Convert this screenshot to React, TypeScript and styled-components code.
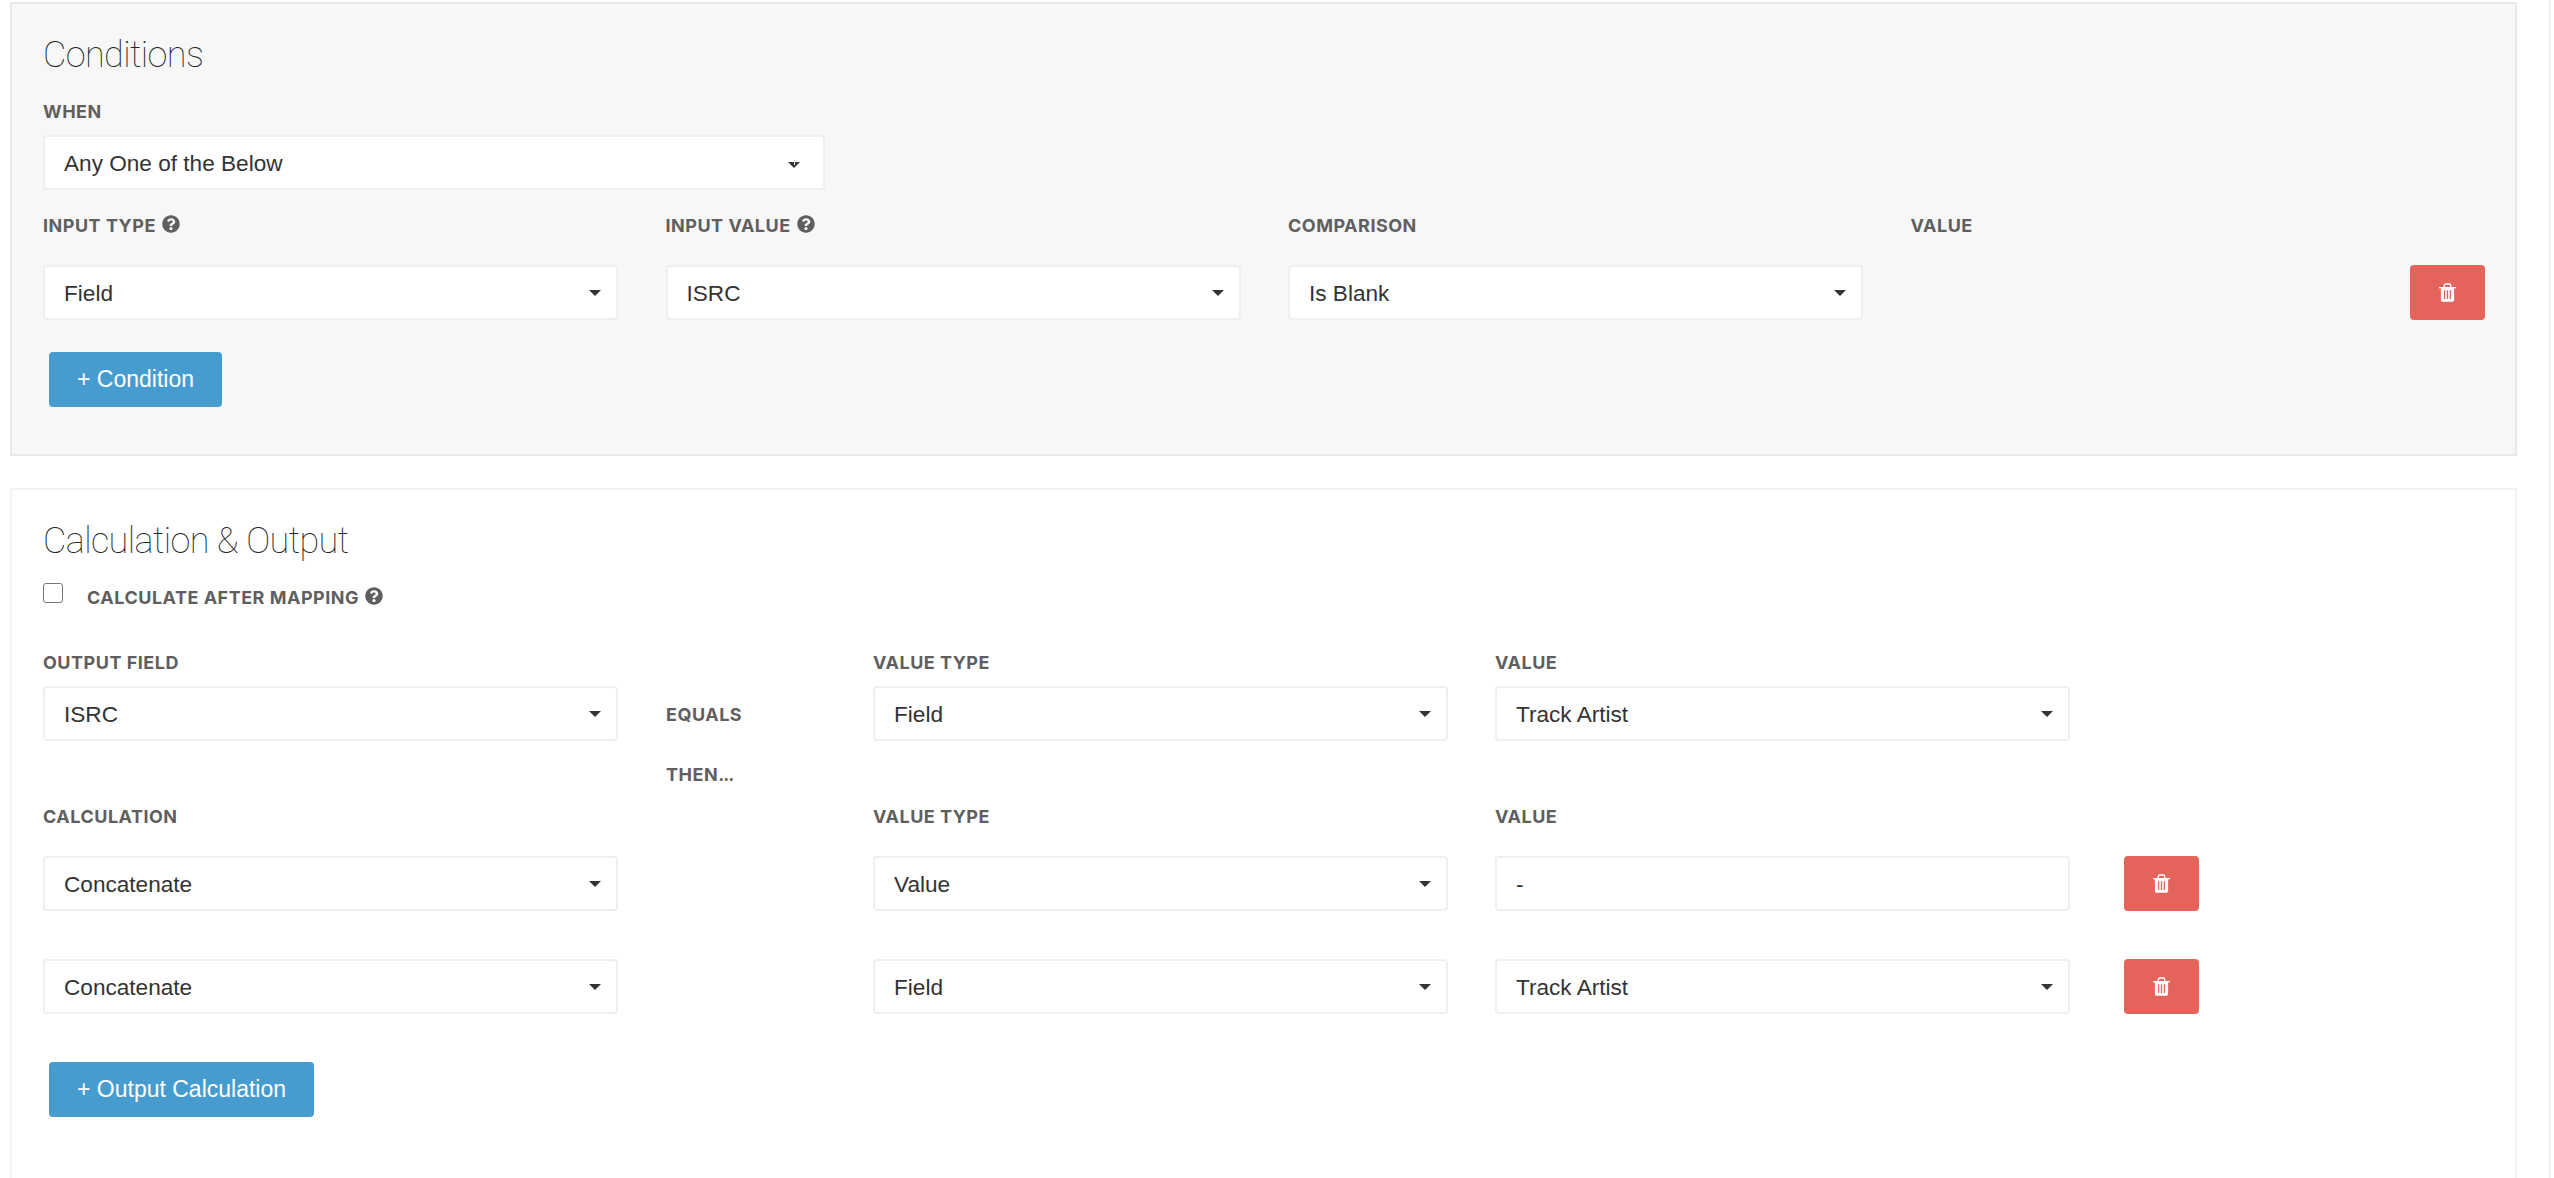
import { ReactNode } from "react";
import styled, { createGlobalStyle } from "styled-components";
import { FaQuestionCircle } from "react-icons/fa";

const GlobalStyle = createGlobalStyle`
  html, body {
    margin: 0;
    background: #fff;
    font-family: "Liberation Sans", Arial, sans-serif;
    color: #333;
  }
  * { box-sizing: border-box; }
`;

const Page = styled.div`
  width: 2551px;
  min-height: 1178px;
  height: 1178px;
  overflow: hidden;
  padding: 2px 32px 0 10px;
  border-right: 2px solid #f0f0f0;
`;

const Panel = styled.section<{ $muted?: boolean }>`
  background: ${(p) => (p.$muted ? "#f7f7f7" : "#fff")};
  border: 2px solid ${(p) => (p.$muted ? "#e8e8e8" : "#f3f3f3")};
  padding: 28px 32px 0 31px;
  height: ${(p) => (p.$muted ? "454px" : "720px")};
  margin-bottom: 32px;
`;

const Heading = styled.h2`
  margin: 0 0 22px;
  font-family: Roboto, sans-serif;
  font-weight: 100;
  font-size: 36px;
  line-height: 46px;
  color: #222;
  letter-spacing: -0.6px;
`;

const Label = styled.label`
  display: flex;
  align-items: center;
  gap: 6px;
  height: 22px;
  font-family: Inter, sans-serif;
  font-weight: 700;
  font-size: 18px;
  letter-spacing: 0.5px;
  color: #5f5f5f;
  white-space: nowrap;
`;

const Help = styled(FaQuestionCircle)`
  width: 18px;
  height: 18px;
  margin-top: -3px;
  color: #5f5f5f;
`;

const SelectWrap = styled.div<{ $wide?: boolean }>`
  position: relative;
  width: ${(p) => (p.$wide ? "782px" : "575px")};
  height: 55px;
  &::after {
    content: "";
    position: absolute;
    right: ${(p) => (p.$wide ? "25px" : "17px")};
    top: ${(p) => (p.$wide ? "27px" : "25px")};
    border-left: 6px solid transparent;
    border-right: 6px solid transparent;
    border-top: 6px solid #333;
    pointer-events: none;
  }
  /* the wider select's arrow has a small notch in its top edge */
  &::before {
    content: "";
    display: ${(p) => (p.$wide ? "block" : "none")};
    position: absolute;
    z-index: 1;
    right: 30px;
    top: 27px;
    width: 1px;
    height: 3px;
    background: #fff;
    pointer-events: none;
  }
`;

const fieldStyles = `
  display: block;
  width: 100%;
  height: 55px;
  padding: 2px 19px 0;
  background: #fff;
  border: 2px solid #efefef;
  border-radius: 4px;
  font-family: "Liberation Sans", Arial, sans-serif;
  font-size: 22.6px;
  color: #333;
  outline: none;
`;

const NativeSelect = styled.select`
  ${fieldStyles}
  appearance: none;
`;

const TextInput = styled.input`
  ${fieldStyles}
  width: 575px;
`;

const Button = styled.button`
  display: block;
  height: 55px;
  margin-left: 6px;
  padding: 0 28px;
  border: none;
  border-radius: 4px;
  background: #479ccf;
  color: #fff;
  font-family: "Liberation Sans", Arial, sans-serif;
  font-size: 23px;
`;

const DeleteButton = styled.button`
  display: flex;
  align-items: center;
  justify-content: center;
  width: 75px;
  height: 55px;
  padding: 0;
  border: none;
  border-radius: 4px;
  background: #e4645c;
  color: #fff;
`;

const WhenBlock = styled.div`
  display: flex;
  flex-direction: column;
  gap: 13px;
  margin-bottom: 24px;
`;

const ConditionHead = styled.div`
  display: grid;
  grid-template-columns: repeat(3, 622.5px) 574px;
  margin-bottom: 29px;
`;

const ConditionRow = styled.div`
  display: grid;
  grid-template-columns: repeat(3, 622.5px) 574px;
  margin-bottom: 32px;
`;

const EndCell = styled.div`
  display: flex;
  justify-content: flex-end;
`;

const CheckRow = styled.div`
  display: flex;
  align-items: center;
  gap: 24px;
  margin: 1px 0 43px;
`;

const Checkbox = styled.input`
  appearance: none;
  width: 20px;
  height: 20px;
  margin: -9px 0 0;
  background: #fff;
  border: 1.5px solid #767676;
  border-radius: 3px;
`;

/* columns: calculation, joiner text, value type, value, delete */
const CalcGrid = styled.div`
  display: grid;
  grid-template-columns: 623px 207px 622px 629px 75px;
  align-items: start;
`;

const HeadRow = styled(CalcGrid)<{ $gap: number }>`
  height: 22px;
  margin-bottom: ${(p) => p.$gap}px;
`;

const CalcRow = styled(CalcGrid)`
  height: 55px;
  margin-bottom: 48px;
`;

const OutputRow = styled(CalcGrid)`
  height: 55px;
`;

const Joiner = styled.div`
  font-family: Inter, sans-serif;
  font-weight: 700;
  font-size: 18px;
  letter-spacing: 0.5px;
  line-height: 22px;
  color: #5f5f5f;
  margin-top: 18px;
`;

const Dots = styled.span`
  letter-spacing: -1px;
`;

const ThenRow = styled.div`
  display: flow-root;
  height: 64px;
  padding: 5px 0 0 623px;
`;

const Trash = () => (
  <svg width="17" height="19" viewBox="0 0 18 20" fill="none">
    <path d="M0 4.2h18v1.4H0z" fill="currentColor" />
    <path d="M5.6 4.4V2.6C5.6 1.6 6.3 1 7.2 1h3.6c.9 0 1.6.6 1.6 1.6v1.8" stroke="currentColor" strokeWidth="1.5" />
    <path
      fillRule="evenodd"
      d="M2 5h14v12.6c0 1.3-.8 2.2-2 2.2H4c-1.2 0-2-.9-2-2.2V5zm3.2 2.6v9.4h1.4V7.6H5.2zm3.1 0v9.4h1.4V7.6H8.3zm3.1 0v9.4h1.4V7.6h-1.4z"
      fill="currentColor"
    />
  </svg>
);

const Select = ({ value, wide }: { value: string; wide?: boolean }) => (
  <SelectWrap $wide={wide}>
    <NativeSelect defaultValue={value}>
      <option>{value}</option>
    </NativeSelect>
  </SelectWrap>
);

const HelpLabel = ({ children }: { children: ReactNode }) => (
  <Label>
    {children}
    <Help />
  </Label>
);

const App = () => {
  return (
    <Page>
      <GlobalStyle />
      <Panel $muted>
        <Heading>Conditions</Heading>
        <WhenBlock>
          <Label>WHEN</Label>
          <Select value="Any One of the Below" wide />
        </WhenBlock>
        <ConditionHead>
          <HelpLabel>INPUT TYPE</HelpLabel>
          <HelpLabel>INPUT VALUE</HelpLabel>
          <Label>COMPARISON</Label>
          <Label>VALUE</Label>
        </ConditionHead>
        <ConditionRow>
          <Select value="Field" />
          <Select value="ISRC" />
          <Select value="Is Blank" />
          <EndCell>
            <DeleteButton aria-label="Delete condition">
              <Trash />
            </DeleteButton>
          </EndCell>
        </ConditionRow>
        <Button>+ Condition</Button>
      </Panel>

      <Panel>
        <Heading>Calculation &amp; Output</Heading>
        <CheckRow>
          <Checkbox type="checkbox" />
          <HelpLabel>CALCULATE AFTER MAPPING</HelpLabel>
        </CheckRow>
        <HeadRow $gap={13}>
          <Label>OUTPUT FIELD</Label>
          <span />
          <Label>VALUE TYPE</Label>
          <Label>VALUE</Label>
        </HeadRow>
        <OutputRow>
          <Select value="ISRC" />
          <Joiner>EQUALS</Joiner>
          <Select value="Field" />
          <Select value="Track Artist" />
        </OutputRow>
        <ThenRow>
          <Joiner>
            THEN<Dots>...</Dots>
          </Joiner>
        </ThenRow>
        <HeadRow $gap={29}>
          <Label>CALCULATION</Label>
          <span />
          <Label>VALUE TYPE</Label>
          <Label>VALUE</Label>
        </HeadRow>
        <CalcRow>
          <Select value="Concatenate" />
          <span />
          <Select value="Value" />
          <TextInput defaultValue="-" />
          <DeleteButton aria-label="Delete calculation">
            <Trash />
          </DeleteButton>
        </CalcRow>
        <CalcRow>
          <Select value="Concatenate" />
          <span />
          <Select value="Field" />
          <Select value="Track Artist" />
          <DeleteButton aria-label="Delete calculation">
            <Trash />
          </DeleteButton>
        </CalcRow>
        <Button>+ Output Calculation</Button>
      </Panel>
    </Page>
  );
};

export default App;
